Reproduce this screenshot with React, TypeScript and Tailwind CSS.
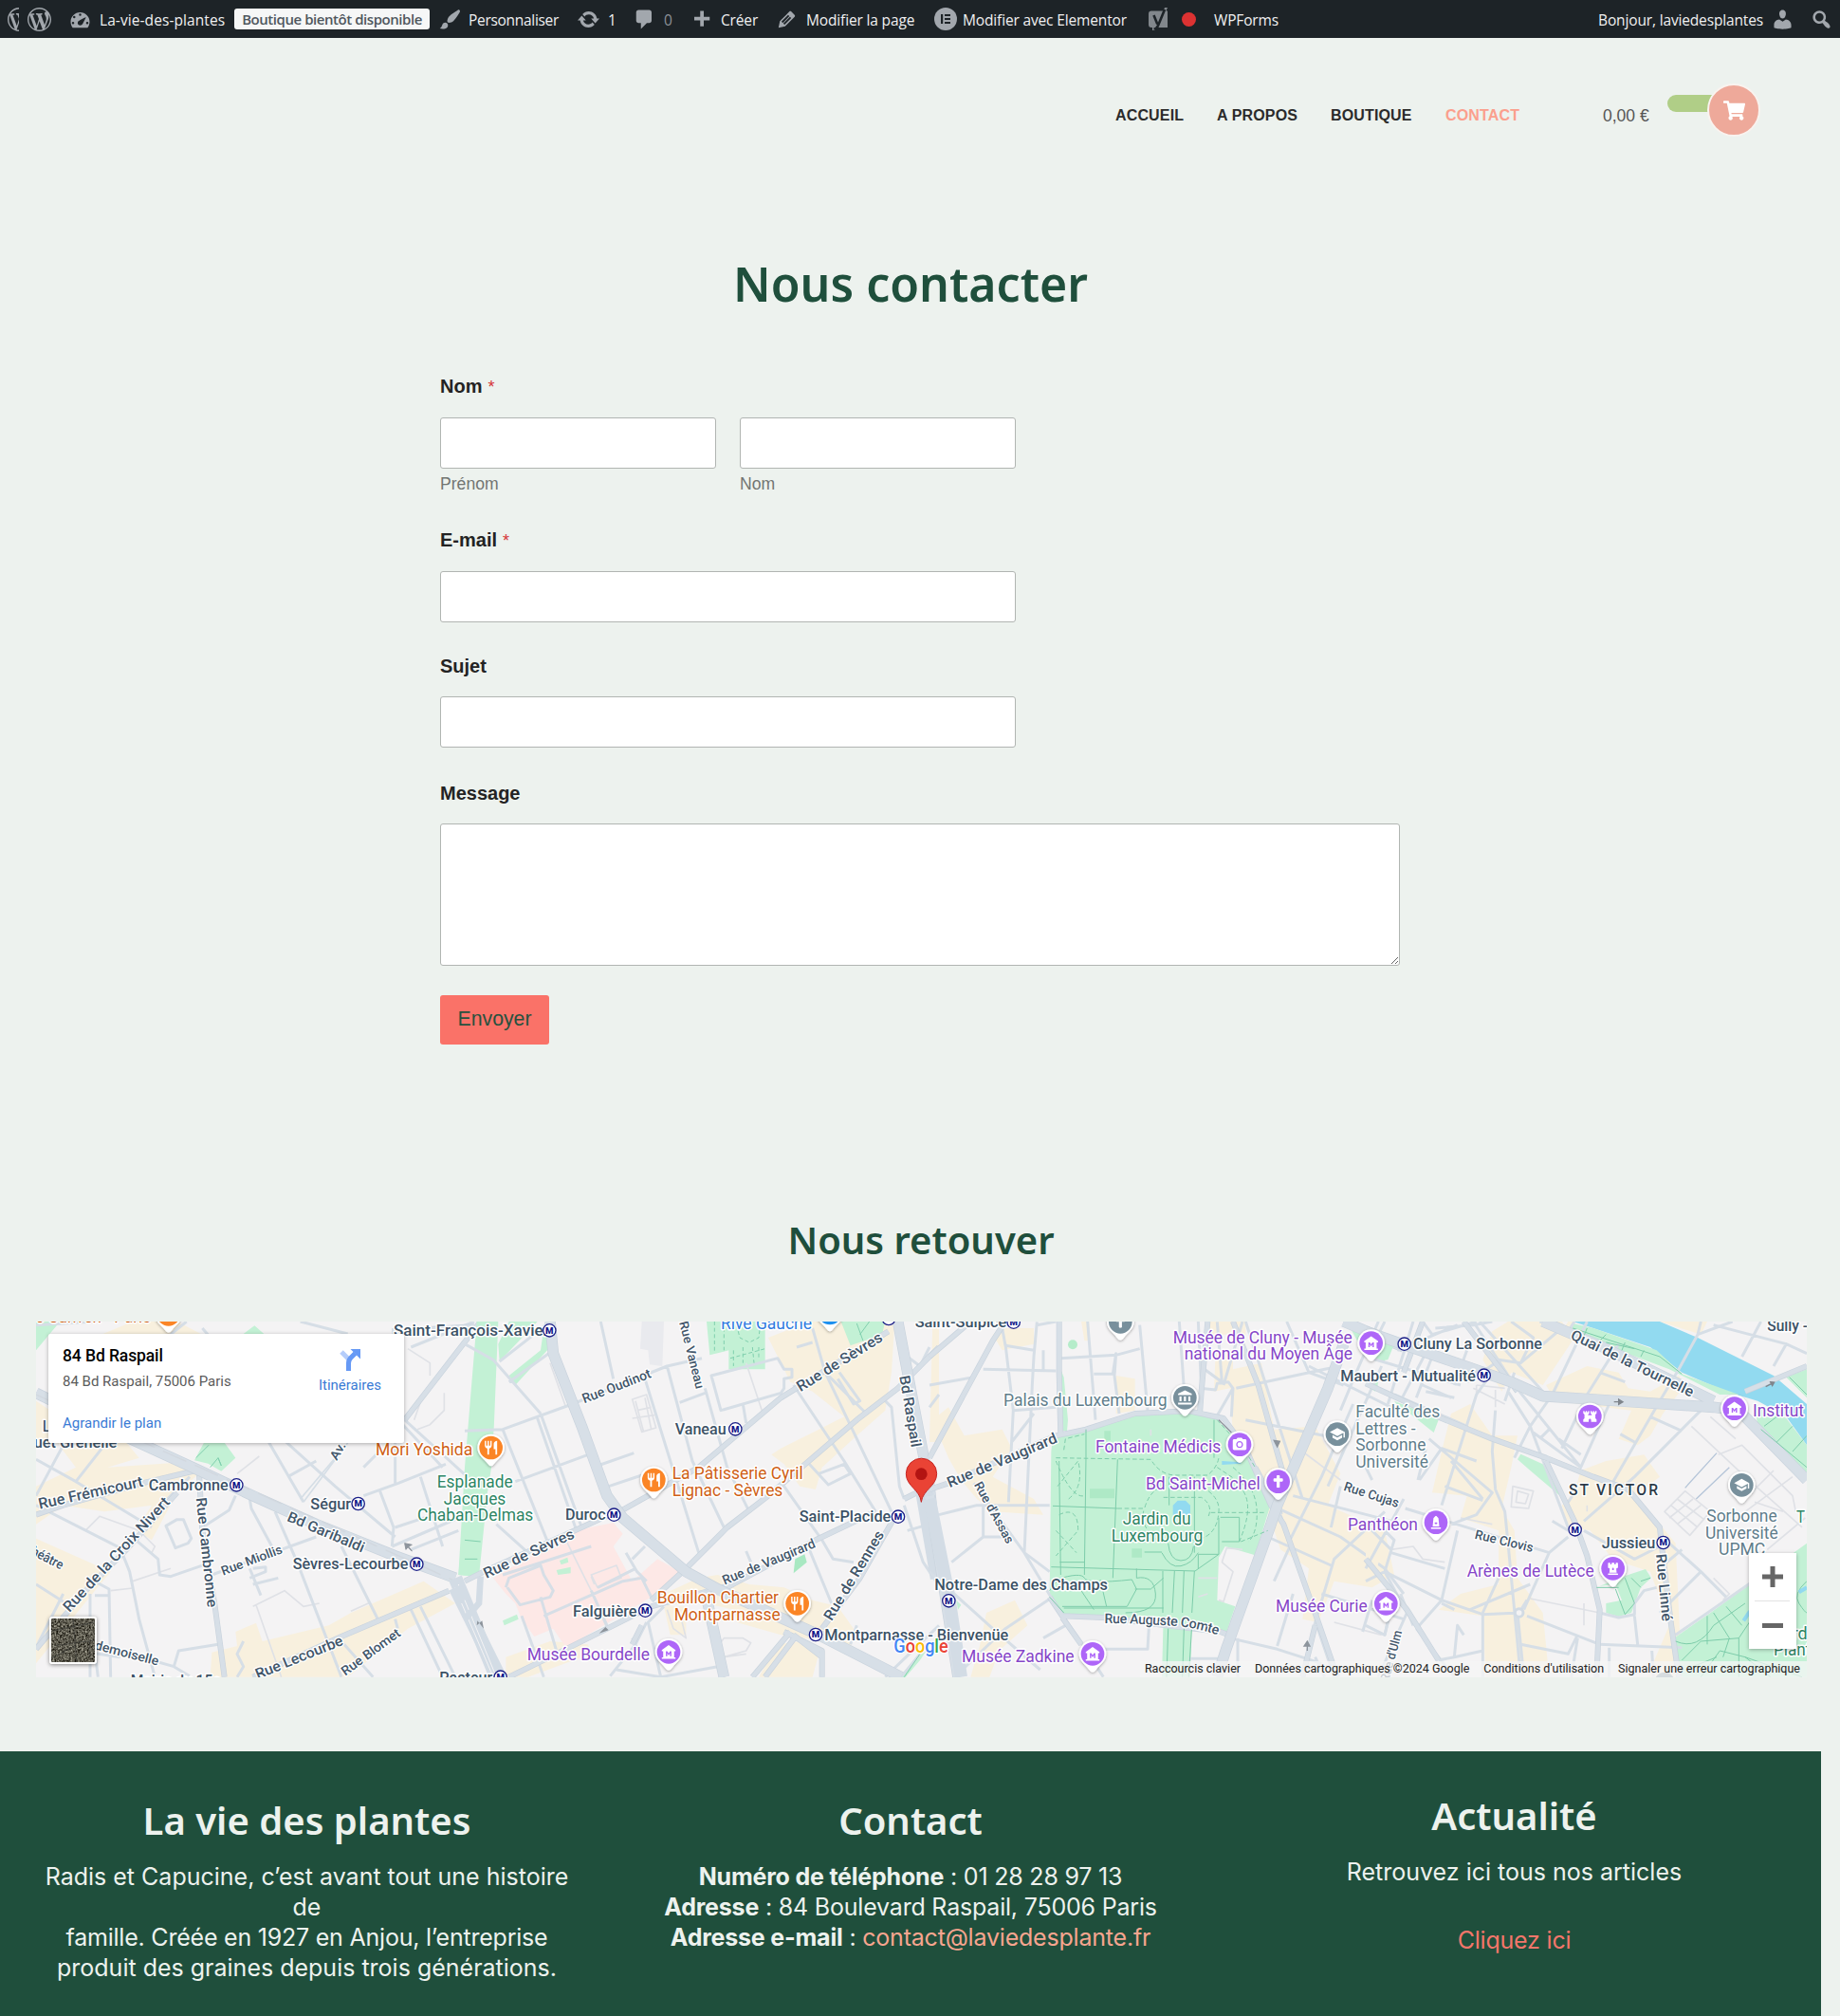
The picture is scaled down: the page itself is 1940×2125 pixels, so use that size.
import type { ReactNode } from "react";
import { MdMuseum, MdRestaurant, MdSchool, MdCameraAlt, MdAccountBalance, MdFort } from "react-icons/md";
import { FaChessRook, FaCross, FaMonument, FaShoppingCart } from "react-icons/fa";

/* ---------- Admin bar ---------- */

const ICONS = {
  wordpress:
    "M20 10c0-5.51-4.49-10-10-10C4.48 0 0 4.49 0 10c0 5.52 4.48 10 10 10 5.51 0 10-4.48 10-10zM7.78 15.37L4.37 6.22c.55-.02 1.17-.08 1.17-.08.5-.06.44-1.13-.06-1.11 0 0-1.45.11-2.37.11-.18 0-.37 0-.58-.01C4.12 2.69 6.87 1.11 10 1.11c2.33 0 4.45.87 6.05 2.34-.68-.11-1.65.39-1.65 1.58 0 .74.45 1.36.9 2.1.35.61.55 1.36.55 2.46 0 1.49-1.4 5-1.4 5l-3.03-8.37c.54-.02.82-.17.82-.17.5-.05.44-1.25-.06-1.22 0 0-1.44.12-2.38.12-.87 0-2.33-.12-2.33-.12-.5-.03-.56 1.2-.06 1.22l.92.08 1.26 3.41zM17.41 10c.24-.64.74-1.87.43-4.25.7 1.29 1.05 2.71 1.05 4.25 0 3.29-1.73 6.24-4.4 7.78.97-2.59 1.94-5.2 2.92-7.78zM6.1 18.09C3.12 16.65 1.11 13.53 1.11 10c0-1.3.23-2.48.72-3.59C3.25 10.3 4.67 14.2 6.1 18.09zm4.03-6.63l2.58 6.98c-.86.29-1.76.45-2.71.45-.79 0-1.57-.11-2.29-.33.81-2.38 1.62-4.74 2.42-7.1z",
  dashboard:
    "M3.76 17h12.48C17.34 15.63 18 13.9 18 12c0-4.41-3.58-8-8-8s-8 3.59-8 8c0 1.9.66 3.63 1.76 5zM9 6a1 1 0 1 1 2 0a1 1 0 1 1-2 0zM4 8a1 1 0 1 1 2 0a1 1 0 1 1-2 0zM8.52 11.4c.84-.83 6.51-3.5 6.51-3.5s-2.66 5.68-3.49 6.51c-.84.84-2.18.84-3.02 0-.83-.83-.83-2.18 0-3.01zM3 13a1 1 0 1 1 2 0a1 1 0 1 1-2 0zM15 13a1 1 0 1 1 2 0a1 1 0 1 1-2 0z",
  brush:
    "M18.33 3.57s.27-.8-.31-1.36c-.53-.52-1.22-.24-1.22-.24-.61.3-5.76 3.47-7.67 5.57-.86.96-2.06 3.79-1.09 4.82.92.98 3.96-.17 4.79-1 2.06-2.06 5.21-7.17 5.5-7.79zM1.4 17.65c2.37-1.56 1.46-3.41 3.23-4.64.93-.65 2.22-.62 3.08.29.63.67.8 2.57-.16 3.46-1.57 1.45-4 1.55-6.15.89z",
  update:
    "M10.2 3.28c3.53 0 6.43 2.61 6.92 6h2.08l-3.5 4-3.5-4h2.32c-.45-1.97-2.21-3.45-4.32-3.45-1.45 0-2.73.71-3.54 1.78L4.95 5.66C6.23 4.2 8.11 3.28 10.2 3.28zm-.4 13.44c-3.52 0-6.43-2.61-6.92-6H.8l3.5-4c1.17 1.33 2.33 2.67 3.5 4H5.48c.45 1.97 2.21 3.45 4.32 3.45 1.45 0 2.73-.71 3.54-1.78l1.71 1.95c-1.28 1.46-3.15 2.38-5.25 2.38z",
  comment: "M5 2h9c1.1 0 2 .9 2 2v7c0 1.1-.9 2-2 2h-2l-5 5v-5H5c-1.1 0-2-.9-2-2V4c0-1.1.9-2 2-2z",
  plus: "M17 7v3h-5v5H9v-5H4V7h5V2h3v5h5z",
  edit: "M13.89 3.39l2.71 2.72c.46.46.42 1.24.03 1.64l-8.01 8.02-5.56 1.16 1.16-5.58s7.6-7.63 7.99-8.03c.39-.39 1.22-.39 1.68.07zm-2.73 2.79l-5.59 5.61 1.11 1.11 5.54-5.65zm-2.97 8.23l5.58-5.6-1.07-1.08-5.59 5.6z",
  user: "M10 9.25c-2.27 0-2.73-3.44-2.73-3.44C7 4.02 7.82 2 9.97 2c2.16 0 2.98 2.02 2.71 3.81 0 0-.41 3.44-2.68 3.44zm0 2.57L12.72 10c2.39 0 4.52 2.33 4.52 4.53v2.49s-3.65 1.13-7.24 1.13c-3.65 0-7.24-1.13-7.24-1.13v-2.49c0-2.25 1.94-4.48 4.47-4.48z",
  search:
    "M12.14 4.18c1.87 1.87 2.11 4.75.72 6.89.12.1.22.21.36.31.2.16.47.36.81.59.34.24.56.39.66.47.42.31.73.57.94.78.32.32.6.65.84 1 .25.35.44.69.59 1.04.14.35.21.68.18 1-.02.32-.14.59-.36.81s-.49.34-.81.36c-.31.02-.65-.04-.99-.19-.35-.14-.7-.34-1.04-.59-.35-.24-.68-.52-1-.84-.21-.21-.47-.52-.77-.93-.1-.13-.25-.35-.47-.66-.22-.32-.4-.57-.56-.78-.16-.2-.29-.35-.44-.5-2.07 1.09-4.69.76-6.44-.98-2.14-2.15-2.14-5.64 0-7.78 2.15-2.15 5.63-2.15 7.78 0zm-1.41 6.36c1.36-1.37 1.36-3.58 0-4.95-1.37-1.37-3.59-1.37-4.95 0-1.37 1.37-1.37 3.58 0 4.95 1.36 1.37 3.58 1.37 4.95 0z",
};

function Dash({ name, className = "" }: { name: keyof typeof ICONS; className?: string }) {
  return (
    <svg viewBox="0 0 20 20" className={`h-[25px] w-[25px] shrink-0 fill-[#a2a7ad] ${className}`}>
      <path fillRule="evenodd" d={ICONS[name]} />
    </svg>
  );
}

function AdminBar() {
  return (
    <header className="flex h-10 items-center whitespace-nowrap bg-[#1d2327] font-['Open_Sans',sans-serif] text-[15.5px] tracking-[-0.15px] text-[#f0f0f1]">
      <div className="ml-2 w-[12px] shrink-0 overflow-hidden">
        <Dash name="wordpress" />
      </div>
      <Dash name="wordpress" className="ml-[9px]" />
      <Dash name="dashboard" className="ml-[18px]" />
      <span className="ml-[8px] w-[142px] pt-[3px] tracking-[0.08px]">La-vie-des-plantes</span>
      <span className="flex h-[22px] w-[206px] items-center justify-center rounded-[3px] bg-[#f6f7f7] pt-px text-[15px] font-semibold tracking-[-0.45px] text-[#50575e]">
        Boutique bientôt disponible
      </span>
      <Dash name="brush" className="ml-[9px]" />
      <span className="ml-[7px] w-[115px] pt-[3px] tracking-[-0.3px]">Personnaliser</span>
      <Dash name="update" className="-ml-[1px]" />
      <span className="ml-[8px] w-[27px] pt-[3px]">1</span>
      <Dash name="comment" className="-ml-[1px]" />
      <span className="ml-[8px] w-[27px] pt-[3px] text-[#8c9197]">0</span>
      <Dash name="plus" className="mt-[2px]" />
      <span className="ml-[8px] w-[57px] pt-[3px]">Créer</span>
      <Dash name="edit" />
      <span className="ml-[8px] w-[134px] pt-[3px]">Modifier la page</span>
      <svg viewBox="0 0 24 24" className="ml-[1px] h-6 w-6 shrink-0">
        <circle cx="12" cy="12" r="12" fill="#a2a7ad" />
        <path d="M7 7h2.200v10H7zM11 7h6v2h-6zM11 11h6v2h-6zM11 15h6v2h-6z" fill="#1d2327" />
      </svg>
      <span className="ml-[6px] w-[196px] pt-[3px]">Modifier avec Elementor</span>
      <svg viewBox="0 0 22 26" className="h-[26px] w-[22px] shrink-0">
        <path d="M3 4.500h12.500L17 1h3L18.500 4.500H20V22H8L6.500 25H4V22H3a3 3 0 0 1-3-3V7.500a3 3 0 0 1 3-3z" fill="#82878c" />
        <path d="M5.500 9l3.800 9.500M17 3L10 20Q8.500 23.500 5.500 23.500" fill="none" stroke="#1d2327" strokeWidth="2.600" />
      </svg>
      <span className="ml-[13px] h-[15px] w-[15px] rounded-full bg-[#dc3232]" />
      <span className="ml-[19px] pt-[3px]">WPForms</span>
      <span className="ml-auto pt-[3px]">Bonjour, laviedesplantes</span>
      <Dash name="user" className="ml-[8px]" />
      <Dash name="search" className="mr-[7px] ml-[16px]" />
    </header>
  );
}

/* ---------- Site header ---------- */

function SiteHeader() {
  return (
    <div className="flex h-[209px] w-[1920px] pt-[48px] font-['Liberation_Sans',Arial,sans-serif]">
      <nav className="ml-auto flex pt-[22px] text-base leading-6 font-bold tracking-[0.15px] text-[#2b2b2b]">
        <span className="w-[107px]">ACCUEIL</span>
        <span className="w-[120px]">A PROPOS</span>
        <span className="w-[121px]">BOUTIQUE</span>
        <span className="w-[166px] text-[#fb9f8d]">CONTACT</span>
      </nav>
      <span className="w-[68px] pt-[20px] text-[17.5px] leading-7 text-[#555]">0,00&nbsp;€</span>
      <div className="flex h-14 w-[162px] items-start">
        <div className="mt-3 h-[18px] w-[60px] rounded-[9px] bg-[#b0ce87]" />
        <div className="-ml-[18px] flex h-14 w-14 shrink-0 items-center justify-center rounded-full border-2 border-[#f9f3ef] bg-[#eea99a]">
          <FaShoppingCart className="h-[21px] w-[23px] text-white" />
        </div>
      </div>
    </div>
  );
}

/* ---------- Contact form ---------- */

const FIELD = "block h-[54px] w-full rounded-[3px] border border-[#b1b5b2] bg-white";

function Label({ children, required }: { children: string; required?: boolean }) {
  return (
    <label className="mb-[19px] block text-xl leading-[26px] font-bold text-[#232323]">
      {children}
      {required && <span className="ml-[6px] text-[18px] font-normal text-[#d63638]">*</span>}
    </label>
  );
}

function ContactForm() {
  return (
    <form className="ml-[464px] w-[1012px] font-['Liberation_Sans',Arial,sans-serif]">
      <div className="h-[161.500px] w-[607px]">
        <Label required>Nom</Label>
        <div className="grid grid-cols-2 gap-[25px]">
          <div>
            <input className={FIELD} />
            <p className="mt-[4px] text-[17.6px] leading-6 text-[#727572]">Prénom</p>
          </div>
          <div>
            <input className={FIELD} />
            <p className="mt-[4px] text-[17.6px] leading-6 text-[#727572]">Nom</p>
          </div>
        </div>
      </div>
      <div className="h-[133.500px] w-[607px]">
        <Label required>E-mail</Label>
        <input className={FIELD} />
      </div>
      <div className="h-[134px] w-[607px]">
        <Label>Sujet</Label>
        <input className={FIELD} />
      </div>
      <div>
        <Label>Message</Label>
        <textarea className="block h-[150px] w-full resize rounded-[3px] border border-[#b1b5b2] bg-white" />
      </div>
      <button
        type="button"
        className="mt-[31px] block h-[52px] w-[115px] rounded-[3px] bg-[#fa7268] text-[21.25px] text-[#27513f]"
      >
        Envoyer
      </button>
    </form>
  );
}

/* ---------- Map ---------- */

const NAVY = "#3c5266";
const ORANGE = "#cf5f16";
const PURPLE = "#8646c8";
const GREEN = "#2d8565";
const SLATE = "#5f7d8b";

/** Group whose units are thirds of a pixel, shifted along the map. */
function Sector({ x, children }: { x: number; children: ReactNode }) {
  return <g transform={`translate(${x} 1380) scale(0.33333)`}>{children}</g>;
}

type TextProps = { x: number; y: number; w: number; t: string; c?: string; size?: number; bold?: boolean };

/** Horizontal place label, w units wide. */
function Place({ x, y, w, t, c = NAVY, bold, size = bold ? 49 : 53 }: TextProps) {
  return (
    <text
      x={x} y={y} textLength={w} lengthAdjust="spacingAndGlyphs" fontSize={size} fill={c}
      fontWeight={bold ? 500 : 400} stroke="#fff" strokeWidth="9" strokeLinejoin="round" paintOrder="stroke"
    >
      {t}
    </text>
  );
}

/** Street name whose baseline runs between two points. */
function Street({ p, t, size = 45 }: { p: [number, number, number, number]; t: string; size?: number }) {
  const [x1, y1, x2, y2] = p;
  const angle = (Math.atan2(y2 - y1, x2 - x1) * 180) / Math.PI;
  return (
    <text
      transform={`translate(${x1} ${y1}) rotate(${angle})`} textLength={Math.hypot(x2 - x1, y2 - y1)}
      lengthAdjust="spacingAndGlyphs" fontSize={size} fill="#42566a" fontWeight="500"
      stroke="#fff" strokeWidth="8" strokeLinejoin="round" paintOrder="stroke"
    >
      {t}
    </text>
  );
}

function Metro({ x, y }: { x: number; y: number }) {
  return (
    <g>
      <circle cx={x} cy={y} r="20" fill="#fff" stroke="#1b1f87" strokeWidth="4" />
      <text x={x} y={y + 10.500} textAnchor="middle" fontSize="29" fontWeight="900" fill="#14188a">M</text>
    </g>
  );
}

type IconType = typeof MdMuseum;

function Pin({ x, y, c, icon: Icon, s = 52 }: { x: number; y: number; c: string; icon: IconType; s?: number }) {
  return (
    <g>
      <path
        d={`M${x - 43} ${y}a43 43 0 1 1 86 0c0 24-20 34-31 49q-6 9-12 9t-12-9c-11-15-31-25-31-49z`}
        fill="#fff" filter="url(#pin-shadow)"
      />
      <circle cx={x} cy={y} r="37" fill={c} />
      <Icon x={x - s / 2} y={y - s / 2} size={s} color="#fff" />
    </g>
  );
}

const ORANGE_PIN = "#fb8526";
const PURPLE_PIN = "#ae66f8";
const SLATE_PIN = "#78909c";

function Roads({ minor, mid = "", major = "", thin = "" }: { minor: string; mid?: string; major?: string; thin?: string }) {
  return (
    <g fill="none" strokeLinejoin="round">
      <path d={thin} stroke="#dfe1e6" strokeWidth="5" />
      <path d={minor} stroke="#d6dee6" strokeWidth="9" />
      <path d={mid} stroke="#c9d3dd" strokeWidth="18" />
      <path d={mid} stroke="#d7dfe7" strokeWidth="14" />
      <path d={major} stroke="#c9d3dd" strokeWidth="35" />
      <path d={major} stroke="#d7dfe7" strokeWidth="31" />
    </g>
  );
}

function WestGround() {
  return (
    <Sector x={0}>
      <g fill="#f8f0de">
        <path d="M180 422H400L440 470 340 500 560 485 630 520 560 580 480 730 430 700 480 620 330 640 200 620 114 680V560L240 500Z" />
        <path d="M114 725L350 830 300 890 114 1120ZM114 290L160 320V422H114ZM320 80L420 39H560L640 80Z" />
        <path d="M665 1163L670 1085 750 1065 745 1020 810 992 830 1050 1040 1000 1110 960 1340 860 1440 930 1290 1010 1100 1163Z" />
      </g>
      <g fill="#c3f1d5">
        <path d="M114 39H190L114 130ZM645 422H710L745 470 700 512 658 488 615 478ZM770 78L805 52 835 78Z" />
        <path d="M1490 400H1570L1500 845 1450 840Z" />
      </g>
      <Roads
        thin="M270 700L315 655 440 700 490 750 480 770M800 940L900 890 960 940 1010 930M810 935L890 1163M420 860L540 820M350 890L420 882M750 520L820 465M1110 955L1170 928M1320 380L1360 365 1405 320V265M1290 125L1360 170V210M1340 265L1310 350"
        minor="M114 475L240 545 430 660 480 690M114 620L380 755 410 830 440 980 490 1163M430 730L500 790 505 840 540 845 670 800M240 545L330 430M114 870L200 925M280 850L345 885 350 1163M285 900V1163M300 905L345 905M310 1163L290 1000M210 1075L380 1100M600 530L520 610M745 590L725 635 640 690M790 600L795 630 860 750M870 640L940 800 1080 1163M1080 750L1200 990M690 1060L565 1080 550 1130 600 1160M550 1130L480 1110M670 840L1000 720M790 820L825 905M800 870L880 850M790 850L840 830 840 815 800 820M850 420L960 610M905 420L1060 560 1250 720M1250 422V550M1150 500L1200 450M1000 480L910 530M1150 590L1260 550 1410 490M1200 570L1245 690 1240 750M1330 530L1400 750M1250 690L1400 640M1280 350L1500 550M1240 750L1450 660M1260 350L1400 500M1300 760L1450 700M1300 950L1400 1163M1330 940L1440 1163M1250 980L1258 1010M525 685L560 665 580 665 605 725 595 740 555 755ZM640 60L700 130M114 50L300 39M590 39L540 80M950 39L1100 78M1300 120L1500 39M200 430L114 590M200 900L114 1070M1180 1163L1080 1050M750 1163L770 1130 750 1090 770 1050"
        mid="M630 520L640 700 680 940 710 1163M1420 890L1080 1035 800 1163M114 650L200 620 450 550 620 510M560 580L400 760 280 880 114 1075M1240 70L1500 55M1520 39L1280 350"
        major="M114 265L380 395 620 505 800 590 1000 680 1250 780 1440 850"
      />
      <path d="M1060 470L950 600M1100 422L960 610" stroke="#d5dee6" strokeWidth="5" />
      <path d="M1440 850L1570 1163" stroke="#d3dce5" strokeWidth="44" />
      <path d="M1440 880L1520 1080M1450 870L1540 1080" stroke="#f4f3f4" strokeWidth="3" />
      <path d="M114 270L1430 855" stroke="#ced3da" strokeWidth="4" fill="none" strokeDasharray="80 30" opacity=".6" />
      <path d="M665 500L690 470 700 495 690 470M620 470L660 430" stroke="#7fcfae" strokeWidth="3" fill="none" />
      <path d="M1280 740L1303 745 1292 750 1303 765 1290 752 1284 760Z" fill="#8d949c" stroke="#8d949c" strokeWidth="3" />
    </Sector>
  );
}

function MidWestGround() {
  return (
    <Sector x={490}>
      <path d="M560 39H630L625 180 585 175 580 130 555 125Z" fill="#e9eaee" />
      <g fill="#f8f0de">
        <path d="M960 90L1090 39H1360L1350 200 1330 320 1240 400 1130 500 1110 570 1060 560 1010 490 970 460 1000 440 1120 380 1200 340 1100 260 1030 230Z" />
        <path d="M740 850L800 840 900 870 1010 880 1100 920 1180 940 1230 1010 1220 1080 1150 1050 1000 1030 860 990 850 950 720 920 640 940 630 900Z" />
        <path d="M990 1060L1060 1050 1120 1090 1100 1163H930ZM130 1163V1100L270 1050 390 1060 400 1090 200 1163ZM630 940H700V1030H650ZM1480 39H1500V420H1470Z" />
      </g>
      <path d="M90 850L350 700 470 675 500 710 470 750 530 860 610 790 680 830 590 910 490 970 320 1070 280 1010 220 1035 180 980 160 930 130 900Z" fill="#fde8e6" />
      <g fill="#c3f1d5">
        <path d="M38 39H106L92 380 45 845-20 840 0 500ZM140 39H230L110 165 106 110ZM250 60L270 120 160 240 140 210 240 130Z" />
        <path d="M765 39H950V190H835V130L775 145ZM1190 39H1330L1320 80 1220 115ZM300 795L325 785 328 800 305 808ZM290 825L335 815 335 835 295 840ZM120 985L165 965 170 980 125 1000ZM1380 1163L1430 1100 1460 1080 1440 1110 1380 1180Z" />
        <path d="M1045 790L1075 775 1082 800 1040 835Z" fill="#a8e8c2" />
      </g>
      <Roads
        thin="M530 285L575 270 605 375 560 388ZM545 320L590 310M540 290L565 385M570 280L590 380M530 345L600 335M890 170L940 320M400 840L480 810 495 850 420 880ZM410 870L400 845M640 950L660 1010 700 1040 680 960M320 730L400 890 450 1010M270 170L320 310M805 1060L820 1040 880 1040 905 1055 890 1080 820 1100M820 1100L890 1090"
        minor="M0 110L90 160 240 330M0 385L120 380 340 300 640 180 750 155M240 330L370 690M120 380L260 730M230 345L350 690M110 165L270 40M140 230L280 130M160 545L390 460M430 39L470 220M420 495L535 455M440 565L560 525M570 220L740 770M640 180L720 480 820 690M760 250L830 500 900 640M680 295L760 265M780 210L990 155 1010 190 1035 190V215L1010 220V250L1000 265 810 320ZM880 300L890 360M1040 240L1200 480 1300 640M1100 60L1140 200 1270 330M1140 200L1350 640M1330 290L1350 310 1375 560 1390 600M1010 560L1130 730 1165 790 1230 800M1090 760L1160 930M1120 520L1200 490 1220 520 1150 555 1090 490M1185 200L1250 290 1230 300 1180 220M1050 120L1100 105M890 765L905 800M510 770L545 830 575 860M530 790L570 750M130 880L140 850 240 810 250 840 280 890 270 910 175 935 135 880M240 910L290 1080M120 840L400 750M250 970L500 860 560 850 590 910M420 880L540 820M400 890L450 1000M630 940L580 990 620 1163M575 990L540 1060 460 1160M480 1140L620 1163 800 1130M760 940L820 1163M180 970L250 1163M530 1040L560 1100M100 680L200 770M1380 1163L1440 1090M1390 620L1450 800 1490 860M1400 700L1470 680M1240 1000L1220 1060M1470 120L1440 180 1400 150M1500 1000L1330 1163"
        mid="M740 500L1000 280 1340 70M490 640L740 500M0 860L60 830 480 640M700 820L830 690 960 590 1240 350 1370 250 1500 120M590 920L700 820M810 890L1110 730 1300 640M590 940L850 870M140 1163L320 1075 590 940M1370 640L1250 850 1130 1010M1010 1020L1130 1080V1163M1390 600L1470 560M950 1163L1050 1030M910 1163L1030 1020M560 1000L530 1060M1040 1030L1130 1100"
        major="M270 39L280 140 370 370 450 590 500 660 700 830 810 890M1370 39L1410 250 1470 560 1500 850M810 890L1120 1030 1380 1163M760 890L820 1163"
      />
      <path d="M30 700L120 580" stroke="#c3f1d5" strokeWidth="2" />
      <path d="M-30 880L110 1163" stroke="#d3dce5" strokeWidth="44" />
      <path d="M-10 930L90 1163M0 920L100 1163" stroke="#f4f3f4" strokeWidth="3" />
      <path d="M50 845L45 930 0 980" stroke="#d3dce5" strokeWidth="20" fill="none" />
      <path d="M1450 560L1500 850" stroke="#d3dce5" strokeWidth="55" />
      <g stroke="#7fcfae" strokeWidth="3" fill="none">
        <path d="M790 39V135M820 39V130M860 50L870 90 900 105 930 90 935 50M840 155L950 125M850 130V180M880 120V170M910 120L915 170M930 120V160" strokeDasharray="12 8" />
        <path d="M1240 45L1260 100M1280 39L1250 80M1390 1163L1440 1090M0 730L50 735M0 790H40" />
      </g>
      <path d="M60 1010L40 985 38 1000 55 985ZM425 1025L445 1005 455 1015Z" fill="#8d949c" />
    </Sector>
  );
}

function MidEastGround() {
  return (
    <Sector x={980}>
      <g fill="#f8f0de">
        <path d="M10 350L60 310 110 400 230 380 260 440 200 530 330 600 360 650 200 640 150 600 100 540 60 470ZM200 80L240 60H330V110L230 130Z" />
        <path d="M480 39H505V100H490ZM590 210L650 220V320L590 330ZM905 130H960V190L1050 170 1090 380 1220 370 1300 520 1260 620 1440 700 1470 840 1400 880 1280 860 1230 990 1180 980 1200 820 1110 760 1070 640 1030 500 960 400 950 250 900 260Z" />
        <path d="M180 960L270 920 310 1000 220 1080 190 1163H130L160 1060ZM880 39H1000V80H870Z" />
      </g>
      <path
        d="M385 450L390 400 495 376 650 335 840 325 905 345 960 400 1030 500 1078 620 1030 778 935 750 915 785 910 920 967 940 940 1020 830 990 825 1163H735L740 975H430L380 905Z"
        fill="#c3f1d5"
      />
      <path d="M415 190L425 215 438 350 435 385 418 385ZM1320 39L1380 75 1450 100 1440 165 1380 150ZM85 920L100 935 90 950ZM1380 240L1420 230 1410 260ZM1470 290L1500 310V330Z" fill="#c3f1d5" />
      <circle cx="453" cy="112" r="15" fill="#b5ecca" />
      <path d="M507 568H585V598H507ZM553 385H573V415H553ZM640 757H672V785H640Z" fill="#aee9c6" />
      <path d="M770 650V620L785 605H810L825 620V650ZM925 480L985 484V488L925 492Z" fill="#92daf0" />
      <Roads
        thin="M925 800L940 755 990 760M925 800L960 830 930 925 915 920M850 850H910M850 910L880 900M700 380V400M1180 450L1300 540M1280 990L1430 1030"
        minor="M0 240L140 215M0 310L30 270M230 60L240 115 330 130M170 190L400 195M340 40L330 150 325 240 300 770M360 130V190M240 110L265 320 250 610M265 320L400 310M260 420L330 330M500 39L525 350M415 155L590 145 665 125M520 205H580L590 140 585 210 600 330M665 50L690 320M790 39L805 250M850 39L860 250 905 255 910 235 945 230 960 250 905 345M910 40L925 230M870 190L925 230M960 250L955 340M970 250L1250 190 1300 180M990 39L930 240M1000 39L1180 600M400 39L340 50M30 650L150 620 380 620M170 620V720L70 800M170 720H250M140 550L300 770 390 920 550 1163M300 770L380 830M0 830L100 920 200 1010 350 1140M390 910L240 1010 80 1163M430 1000L360 1040M550 1075H690L695 990M950 1040L1100 1075 1240 1120M975 1040V1163M820 1105H940M1100 1065L1150 900M1230 980L1110 650M1220 990L1180 1163M1225 1000L1280 1163M1080 620L1300 720 1440 820 1500 900M1140 730L1240 530 1340 300M1000 350L1300 410M1150 590L1500 680M1270 690L1300 560M1220 990L1280 790 1440 640M1070 720L1270 810M1140 750L1090 860M1240 900L1500 980M1370 1020L1400 920M1440 1030L1460 940M1130 39L1200 200 1310 240M1420 39L1350 200 1300 320M1200 180L1500 330M1430 180L1260 560M1250 1163L1220 1100"
        mid="M0 570L60 550 400 400 495 380 650 330 820 322 930 345 1000 440 1080 620 1120 680 1230 990 1290 1163M0 470L200 100 240 39M1220 1000L1180 1163M1030 500L1110 650M880 39L860 260 855 330M380 910L420 970 550 975 750 1000 920 1020 960 1035M410 39V200L415 400M0 150L130 39M960 39L1040 240 1130 560M420 975L480 1060"
        major="M0 590L90 1163M1310 110L1260 250 1100 620 1080 680 940 1070 910 1163M1310 39L1500 120"
      />
      <path d="M0 600L60 900 100 1163" stroke="#d3dce5" strokeWidth="40" fill="none" />
      <g fill="none" stroke="#7cccaa" strokeWidth="3">
        <path d="M495 380V470L490 840M595 475L580 850M390 622L595 630M385 815L840 828 915 775H850V820M410 480L415 840M758 530V620M838 530V770M755 740Q760 795 795 795T835 750M735 770Q760 820 795 812T850 770M680 768H735M738 828V960M775 828L768 960M805 828L800 960M838 828L830 960M915 660V775M920 658H980V735H925M412 800H490M400 855Q480 830 490 850T640 855L655 885 625 940H420M655 820V850Q710 840 715 900T620 960M480 890L520 950M540 855L560 940M380 910L425 960M900 350V470M380 890L410 850M650 885H700L740 850M425 945H740M755 1010L750 1163M805 1010L800 1163M830 1000L820 1163" />
        <path
          d="M400 470L700 475Q730 525 780 525H880Q910 500 915 470M425 445L430 410 490 395M400 480Q450 600 490 590M405 560L470 480Q490 560 440 600M410 650Q470 620 470 700L400 780M400 700L465 770M595 630H680Q700 560 760 555H850Q920 590 915 640 910 720 840 730H720Q660 680 680 630M740 595H860Q900 620 880 660M910 350L1000 450 1030 500M920 530Q980 540 1000 590T980 735M960 500Q1030 560 1035 630T1010 735M890 643H1060M985 735L1070 700M910 500L1000 560"
          strokeDasharray="14 8"
        />
      </g>
      <path d="M915 350L955 390M1090 415L1100 435 1108 418ZM1195 1055V1080M1185 1065L1195 1050 1203 1065Z" stroke="#8d949c" strokeWidth="4" fill="#8d949c" />
    </Sector>
  );
}

function EastGround() {
  return (
    <Sector x={1440}>
      <g fill="#f8f0de">
        <path d="M370 160L400 70 450 39H620L660 90 560 240 460 200 430 260ZM640 39H660V55H630ZM570 240L700 180 800 200 830 250 900 260 990 210 1010 240 940 330 900 400 860 430 800 410 840 320 600 290Z" />
        <path d="M270 330L330 300 400 400 480 400 460 500 430 630 470 700 480 850 560 960 580 1163H380L370 970 230 950 300 900 420 870 420 700 300 660 320 590 210 580 240 450Z" />
        <path d="M680 510L760 480 880 460 930 530 850 590 930 680 980 740 1000 1163H890L960 1000 900 830 780 790 710 700 640 690 620 620 660 580ZM0 740L50 770 20 870 0 850ZM930 39H1080L1060 80Z" />
      </g>
      <path d="M655 39H930L1050 90 1290 210 1395 300V430L1330 340 1240 290 1140 260 1000 200 900 120 720 60Z" fill="#92daf0" />
      <g fill="#c3f1d5">
        <path d="M655 45L720 60 920 130 1000 205 1180 270 1120 270 960 190 800 130 650 70ZM1230 300L1330 345 1395 430V520L1240 370ZM1330 215L1395 190V280ZM480 475L490 458 560 490 620 595 520 510ZM50 110L90 110 70 160 30 165ZM90 290L190 330 230 350 215 390ZM0 230L40 240 20 255Z" />
        <path d="M740 875L830 840 885 822 903 850 870 880 840 960 800 972 760 960V930L810 920 790 870ZM975 1040L1090 960 1395 740V1163H1000Z" />
      </g>
      <Roads
        thin="M465 560L530 575 515 630 460 625ZM480 575L515 585 505 615 475 610ZM520 915L740 960M700 620V640M350 240L440 250M350 240V270M340 250L440 300M410 255V310M945 640L1010 575 1090 640 1025 715ZM965 620L1050 690M985 600L1070 665M960 660L1035 600M985 680L1060 620M1030 370L1200 530 1380 690M1090 340L1170 410M1115 460L1190 430 1350 590 1360 640M1200 640L1350 530M1230 610L1320 640M1290 510L1210 590M1100 850L1150 900 1130 920M1270 760L1390 660M80 760L150 750 180 790 250 800M690 930V1000M300 660L400 680"
        minor="M60 39L30 100M290 50L100 130M180 39L210 80 350 39M220 60L340 50 400 39M340 39L470 240 680 500M360 39L560 260M460 39L530 90 490 170 420 160M550 39L620 60 490 170M320 130L280 240M210 150L160 280M0 150L300 240M110 290L210 100M190 260L280 280M90 270L320 370M180 240L270 280M400 200L350 270 240 620M320 230L410 170M410 320L400 450 410 570 440 640 450 740 490 1163M470 200L440 290M450 260L520 370 640 690M520 370L590 270 700 39M530 390L680 500 770 300M620 440L700 270 800 110M610 410L680 460M470 470L520 370M740 200L820 230M780 130L840 160M780 550L930 290 990 190M640 610L660 580M690 670L850 530 1060 320M900 340L1000 385M840 560L780 550M805 395L850 420M550 410L580 380M0 500L20 540M200 410L400 580 350 650 270 680M170 540L240 440 350 480M270 480L370 600M250 560L370 605M125 630L580 770M290 700L240 920 160 1010M60 830L240 920 370 965 485 960 510 920M80 760L0 680M80 770L250 820M60 830L90 730 60 700M640 720L580 770 500 950M330 950L520 870M0 1000L60 1030 80 950M370 960V1163M280 1100L370 1080M280 1100L290 1000 310 1030M230 1110L280 1100M480 960L500 1163M490 1060L640 1090 670 1030M650 1163L670 1040M510 970L740 1060 1000 1070M770 1070V1163M905 1080L910 1163M850 970L860 1060M690 700L850 790 930 750M740 960L800 975 850 965 850 930 880 890 920 880M930 960L1060 830M960 740L1060 830 1140 910M1000 760L940 810M160 1010L280 1163M0 860L60 830M990 190L1050 80 1060 39M1050 80L1160 39M1190 150L1250 39M1290 180L1330 110 1395 140M1100 50L1330 110M660 39L640 70M980 1030L1240 850M240 930L280 950M150 39L70 300M420 850L370 960M165 540L190 440M0 820L120 600M60 830L130 960 40 1163M590 670L640 700M150 1000L110 900"
        mid="M0 235L240 345 400 410 570 470 720 530 830 570 930 690 935 740 965 990 990 1163M570 480L660 670 700 780 740 950 730 1163M180 39L120 200M310 39L480 260M0 790L130 950 230 1110M1200 260L1395 180"
        major="M0 70L200 140 460 230 560 275 720 285 1100 310 1180 320 1395 540M560 39L750 120 1100 290"
      />
      <circle cx="485" cy="960" r="13" fill="#f4f3f4" stroke="#d2dbe4" strokeWidth="9" />
      <path d="M1010 565L1110 455M1045 600L1150 500" stroke="#b5c5d8" strokeWidth="4" />
      <g stroke="#7cccaa" strokeWidth="3" fill="none">
        <path d="M655 60L930 150 1000 205M700 60L690 85M760 80L740 100M820 105L810 130M880 130L870 150M760 105L850 125M1250 380L1395 500M1260 370L1300 340M1300 420L1350 370M1350 450L1395 400M1340 215L1395 270M820 850L850 930 820 965M790 885L820 965M840 850L870 880M900 850L870 860M730 880L800 880" />
        <path d="M980 1050Q1050 1080 1100 1000L1200 930M1000 1110L1060 1050 1180 1040 1220 980M1060 1163L1120 1080 1200 1100 1280 1163M1100 960L1150 1040 1130 1100M1010 1140L1110 1100M1180 1040V1163M1395 860Q1350 900 1370 930T1395 960M1080 970V1060M1380 1163L1200 1100M1140 940L1190 1000" />
      </g>
      <path d="M1195 985L1215 955M1370 895L1395 880" stroke="#92daf0" strokeWidth="12" />
      <path d="M785 293H810M800 285L813 293 800 301ZM1265 245L1290 232M1280 230L1292 231 1286 242Z" stroke="#7f858c" strokeWidth="4" fill="#7f858c" />
      <circle cx="945" cy="1180" r="32" fill="#78909c" />
    </Sector>
  );
}

function MapLabels() {
  return (
    <>
      <Sector x={0}>
        <Place x={112} y={42} w={365} t="o Sunven - Paris" c={ORANGE} />
        <Place x={1245} y={84} w={491} t="Saint-François-Xavier" bold />
        <Place x={135} y={387} w={45} t="La" bold />
        <Place x={10} y={437} w={360} t="Picquet Grenelle" bold />
        <Place x={470} y={573} w={252} t="Cambronne" bold />
        <Place x={982} y={632} w={128} t="Ségur" bold />
        <Place x={926} y={822} w={365} t="Sèvres-Lecourbe" bold />
        <Place x={1188} y={463} w={307} t="Mori Yoshida" c={ORANGE} />
        <Place x={1382} y={565} w={240} t="Esplanade" c={GREEN} />
        <Place x={1403} y={617} w={197} t="Jacques" c={GREEN} />
        <Place x={1320} y={669} w={367} t="Chaban-Delmas" c={GREEN} />
        <Place x={1390} y={1182} w={168} t="Pasteur" bold />
        <Place x={413} y={1192} w={285} t="Mairie du 15e" bold />
        <Street p={[125, 632, 455, 560]} t="Rue Frémicourt" size={48} />
        <Street p={[220, 960, 540, 612]} t="Rue de la Croix Nivert" size={47} />
        <Street p={[620, 597, 657, 944]} t="Rue Cambronne" size={46} />
        <Street p={[706, 842, 896, 770]} t="Rue Miollis" size={40} />
        <Street p={[905, 668, 1145, 770]} t="Bd Garibaldi" size={46} />
        <Street p={[815, 1170, 1088, 1060]} t="Rue Lecourbe" size={46} />
        <Street p={[1092, 1160, 1270, 1030]} t="Rue Blomet" size={41} />
        <Street p={[75, 764, 192, 824]} t="Théâtre" size={42} />
        <Street p={[240, 1060, 498, 1127]} t="Mademoiselle" size={41} />
        <Street p={[1065, 480, 1095, 430]} t="Av." size={40} />
        <Metro x={748} y={556} />
        <Metro x={1133} y={615} />
        <Metro x={1318} y={806} />
        <Pin x={533} y={16} c={ORANGE_PIN} icon={MdRestaurant} />
      </Sector>
      <Sector x={490}>
        <Place x={665} y={395} w={162} t="Vaneau" bold />
        <Place x={318} y={667} w={128} t="Duroc" bold />
        <Place x={1058} y={673} w={290} t="Saint-Placide" bold />
        <Place x={342} y={971} w={203} t="Falguière" bold />
        <Place x={1138} y={1046} w={582} t="Montparnasse - Bienvenüe" bold />
        <Place x={810} y={64} w={288} t="Rive Gauche" c="#2f7be0" />
        <Place x={656} y={538} w={414} t="La Pâtisserie Cyril" c={ORANGE} />
        <Place x={656} y={591} w={350} t="Lignac - Sèvres" c={ORANGE} />
        <Place x={608} y={930} w={385} t="Bouillon Chartier" c={ORANGE} />
        <Place x={662} y={983} w={336} t="Montparnasse" c={ORANGE} />
        <Place x={197} y={1110} w={388} t="Musée Bourdelle" c={PURPLE} />
        <Street p={[378, 298, 592, 215]} t="Rue Oudinot" size={42} />
        <Street p={[678, 42, 732, 254]} t="Rue Vaneau" size={40} />
        <Street p={[1062, 262, 1325, 98]} t="Rue de Sèvres" size={47} />
        <Street p={[1375, 212, 1413, 438]} t="Bd Raspail" size={46} />
        <Street p={[68, 852, 350, 722]} t="Rue de Sèvres" size={47} />
        <Street p={[822, 872, 1112, 752]} t="Rue de Vaugirard" size={42} />
        <Street p={[1160, 988, 1328, 712]} t="Rue de Rennes" size={46} />
        <Metro x={268} y={67} />
        <Metro x={856} y={379} />
        <Metro x={472} y={650} />
        <Metro x={1371} y={656} />
        <Metro x={571} y={953} />
        <Metro x={1110} y={1029} />
        <Metro x={113} y={1163} />
        <Metro x={1341} y={30} />
        <Pin x={83} y={438} c={ORANGE_PIN} icon={MdRestaurant} />
        <Pin x={598} y={540} c={ORANGE_PIN} icon={MdRestaurant} />
        <Pin x={1052} y={931} c={ORANGE_PIN} icon={MdRestaurant} />
        <Pin x={645} y={1084} c={PURPLE_PIN} icon={MdMuseum} />
        <Pin x={1155} y={12} c="#1e90ef" icon={MdAccountBalance} />
        <path d="M1444 610C1440 570 1396 560 1396 520a48 48 0 1 1 97 0C1493 560 1449 570 1444 610Z" fill="#ea4335" stroke="#c5221f" strokeWidth="3" />
        <circle cx="1444" cy="521" r="19" fill="#b31412" />
        <text x="1357" y="1087" fontSize="58" textLength="172" lengthAdjust="spacingAndGlyphs" fontWeight="500" stroke="#fff" strokeWidth="7" paintOrder="stroke">
          <tspan fill="#4285f4">G</tspan>
          <tspan fill="#ea4335">o</tspan>
          <tspan fill="#fbbc05">o</tspan>
          <tspan fill="#4285f4">g</tspan>
          <tspan fill="#34a853">l</tspan>
          <tspan fill="#ea4335">e</tspan>
        </text>
      </Sector>
      <Sector x={980}>
        <Place x={-46} y={56} w={290} t="Saint-Sulpice" bold />
        <Place x={770} y={107} w={567} t="Musée de Cluny - Musée" c={PURPLE} />
        <Place x={806} y={160} w={532} t="national du Moyen Âge" c={PURPLE} />
        <Place x={1300} y={227} w={428} t="Maubert - Mutualité" bold />
        <Place x={234} y={306} w={518} t="Palais du Luxembourg" c={SLATE} />
        <Place x={525} y={454} w={397} t="Fontaine Médicis" c={PURPLE} />
        <Place x={684} y={570} w={362} t="Bd Saint-Michel" c={PURPLE} />
        <Place x={611} y={681} w={216} t="Jardin du" c={GREEN} />
        <Place x={575} y={734} w={290} t="Luxembourg" c={GREEN} />
        <Place x={16} y={888} w={548} t="Notre-Dame des Champs" bold />
        <Place x={102} y={1116} w={356} t="Musée Zadkine" c={PURPLE} />
        <Place x={1095} y={957} w={290} t="Musée Curie" c={PURPLE} />
        <Place x={1323} y={699} w={222} t="Panthéon" c={PURPLE} />
        <Place x={1348} y={342} w={267} t="Faculté des" c={SLATE} />
        <Place x={1348} y={395} w={190} t="Lettres -" c={SLATE} />
        <Place x={1348} y={447} w={222} t="Sorbonne" c={SLATE} />
        <Place x={1348} y={500} w={230} t="Université" c={SLATE} />
        <Street p={[64, 565, 407, 420]} t="Rue de Vaugirard" size={47} />
        <Street p={[140, 555, 245, 744]} t="Rue d'Assas" size={40} />
        <Street p={[1308, 572, 1480, 627]} t="Rue Cujas" size={41} />
        <Street p={[1452, 1180, 1495, 1020]} t="Rue d'Ulm" size={40} />
        <path id="comte" d="M553 993C650 993 730 998 800 1004Q860 1012 912 1030" fill="none" />
        <text fontSize="43" fontWeight="500" fill="#42566a" stroke="#fff" strokeWidth="8" paintOrder="stroke" textLength="362">
          <textPath href="#comte">Rue Auguste Comte</textPath>
        </text>
        <Metro x={266} y={41} />
        <Metro x={61} y={922} />
        <Pin x={604} y={40} c={SLATE_PIN} icon={FaCross} s={38} />
        <Pin x={1397} y={107} c={PURPLE_PIN} icon={MdMuseum} />
        <Pin x={808} y={280} c={SLATE_PIN} icon={MdAccountBalance} />
        <Pin x={981} y={428} c={PURPLE_PIN} icon={MdCameraAlt} />
        <Pin x={1103} y={545} c={PURPLE_PIN} icon={FaCross} s={40} />
        <Pin x={1290} y={395} c={SLATE_PIN} icon={MdSchool} />
        <Pin x={516} y={1090} c={PURPLE_PIN} icon={MdMuseum} />
        <Pin x={1444} y={931} c={PURPLE_PIN} icon={MdMuseum} />
      </Sector>
      <Sector x={1440}>
        <Place x={150} y={126} w={408} t="Cluny La Sorbonne" bold />
        <Place x={1270} y={69} w={128} t="Sully -" bold />
        <Place x={1224} y={340} w={162} t="Institut" c={PURPLE} />
        <text x="642" y="588" fontSize="47" fontWeight="500" fill="#2d3b49" textLength="282" stroke="#fff" strokeWidth="8" paintOrder="stroke">
          ST VICTOR
        </text>
        <Place x={1078} y={672} w={223} t="Sorbonne" c={SLATE} />
        <Place x={1074} y={725} w={230} t="Université" c={SLATE} />
        <Place x={1116} y={777} w={148} t="UPMC" c={SLATE} />
        <Place x={1362} y={674} w={27} t="T" c={GREEN} />
        <Place x={1290} y={1043} w={150} t="Jardin" c={GREEN} />
        <Place x={1290} y={1095} w={145} t="Plante" c={GREEN} />
        <Place x={746} y={756} w={170} t="Jussieu" bold />
        <Place x={320} y={846} w={402} t="Arènes de Lutèce" c={PURPLE} />
        <Street p={[343, 725, 526, 768]} t="Rue Clovis" size={41} />
        <Street p={[918, 775, 938, 988]} t="Rue Linné" size={46} />
        <Street p={[645, 92, 1028, 278]} t="Quai de la Tournelle" size={46} />
        <Metro x={122} y={110} />
        <Metro x={374} y={209} />
        <Metro x={662} y={697} />
        <Metro x={941} y={738} />
        <Pin x={709} y={339} c={PURPLE_PIN} icon={MdFort} s={46} />
        <Pin x={1166} y={314} c={PURPLE_PIN} icon={MdMuseum} />
        <Pin x={1189} y={556} c={SLATE_PIN} icon={MdSchool} />
        <Pin x={222} y={674} c={PURPLE_PIN} icon={FaMonument} s={42} />
        <Pin x={782} y={820} c={PURPLE_PIN} icon={FaChessRook} s={42} />
      </Sector>
    </>
  );
}

function SatelliteThumb() {
  return (
    <svg viewBox="0 0 48 48" className="absolute bottom-[14px] left-[14px] h-[50px] w-[50px] rounded-[3px] border-2 border-white shadow-[0_1px_4px_rgba(0,0,0,0.45)]">
      <filter id="grain" x="0" y="0" width="100%" height="100%" colorInterpolationFilters="sRGB">
        <feTurbulence type="fractalNoise" baseFrequency="0.5" numOctaves="3" seed="4" />
        <feColorMatrix values="1 0 0 0 -0.14  1 0 0 0 -0.15  0.95 0 0 0 -0.17  0 0 0 0 1" />
      </filter>
      <rect width="48" height="48" filter="url(#grain)" />
      <path d="M0 14L48 4M24 0L28 48M3 30L48 24M0 44L26 30M42 24V42" stroke="#3a3b38" strokeWidth="1.200" opacity=".6" />
    </svg>
  );
}

function LocationMap() {
  return (
    <div className="relative ml-[38px] h-[375px] w-[1867px] overflow-hidden bg-[#f4f3f4] font-[Roboto,sans-serif]">
      <svg viewBox="38 1393 1867 375" className="block h-full w-full">
        <defs>
          <filter id="pin-shadow" x="-20%" y="-20%" width="140%" height="140%">
            <feDropShadow dx="0" dy="3" stdDeviation="4" floodColor="#000" floodOpacity=".35" />
          </filter>
        </defs>
        <WestGround />
        <MidWestGround />
        <MidEastGround />
        <EastGround />
        <MapLabels />
      </svg>

      <div className="absolute top-[13px] left-[13px] flex h-[115px] w-[375px] justify-between rounded-[2px] bg-white pt-[11px] pr-[24px] pl-[15px] shadow-[0_1px_4px_rgba(0,0,0,0.3)]">
        <div>
          <p className="text-[17.5px] leading-6 font-medium tracking-[-0.1px] text-black">84 Bd Raspail</p>
          <p className="mt-[5px] text-[15px] leading-5 text-[#5b5b5b]">84 Bd Raspail, 75006 Paris</p>
          <p className="mt-[24px] text-[15px] leading-5 text-[#3a7bd5]">Agrandir le plan</p>
        </div>
        <div className="flex flex-col items-center pt-[5px]">
          <svg viewBox="0 0 22 23" className="h-[23px] w-[22px]">
            <path d="M2 3L9.500 10.500" stroke="#b5cdfb" strokeWidth="5" />
            <path d="M9.500 23V15Q9.500 11.500 12 9L16.500 4.500" stroke="#6699f5" strokeWidth="5" fill="none" />
            <path d="M11.500 0H22V10.500Z" fill="#6699f5" />
          </svg>
          <p className="mt-[5px] text-[15px] leading-5 text-[#3a7bd5]">Itinéraires</p>
        </div>
      </div>

      <SatelliteThumb />

      <div className="absolute right-[11px] bottom-[30px] flex h-[101px] w-[50px] flex-col items-center bg-white shadow-[0_1px_4px_rgba(0,0,0,0.3)]">
        <svg viewBox="0 0 50 101" className="h-full w-full">
          <path d="M14 25H36M25 14V36M14 76.500H36" stroke="#666" strokeWidth="5" />
          <path d="M6 50.500H43" stroke="#e3e3e3" />
        </svg>
      </div>

      <div className="absolute right-0 bottom-0 flex h-[17px] items-center gap-[15px] bg-[#f5f5f5]/75 pr-[7px] pl-[5px] text-[12.5px] leading-none whitespace-nowrap text-[#222]">
        <span>Raccourcis clavier</span>
        <span>Données cartographiques ©2024 Google</span>
        <span>Conditions d'utilisation</span>
        <span>Signaler une erreur cartographique</span>
      </div>
    </div>
  );
}

/* ---------- Footer ---------- */

function FooterTitle({ children }: { children: string }) {
  return <h3 className="mb-[19px] font-['Noto_Sans',sans-serif] text-[40px] leading-[48px] font-semibold">{children}</h3>;
}

function Footer() {
  return (
    <footer className="mt-[78px] flex h-[279px] w-[1920px] bg-[#1f4f3c] text-center font-[Inter,sans-serif] text-[25px] leading-8 text-[#edf2ee]">
      <div className="w-[647px] pt-[49px]">
        <FooterTitle>La vie des plantes</FooterTitle>
        <p>
          Radis et Capucine, c’est avant tout une histoire
          <br />
          de
          <br />
          <span className="tracking-[-0.22px]">famille. Créée en 1927 en Anjou, l’entreprise</span>
          <br />
          produit des graines depuis trois générations.
        </p>
      </div>
      <div className="w-[626px] pt-[49px]">
        <FooterTitle>Contact</FooterTitle>
        <p className="tracking-[-0.2px]">
          <b>Numéro de téléphone</b> : 01 28 28 97 13
          <br />
          <b>Adresse</b> : 84 Boulevard Raspail, 75006 Paris
          <br />
          <b>Adresse e-mail</b> : <a className="text-[#f7a58f]">contact@laviedesplante.fr</a>
        </p>
      </div>
      <div className="w-[647px] pt-[44px]">
        <FooterTitle>Actualité</FooterTitle>
        <p>Retrouvez ici tous nos articles</p>
        <a className="mt-[40px] block tracking-[-0.2px] text-[#f4766a]">Cliquez ici</a>
      </div>
    </footer>
  );
}

export default function App() {
  return (
    <div className="h-[2125px] w-[1940px] overflow-hidden bg-[#edf2ee]">
      <AdminBar />
      <SiteHeader />
      <h1 className="w-[1920px] text-center font-['Noto_Sans',sans-serif] text-[50px] leading-[100px] font-semibold text-[#1f4f3c]">Nous contacter</h1>
      <div className="mt-[45px]">
        <ContactForm />
      </div>
      <h2 className="mt-[176px] mb-[56px] ml-px w-[1940px] text-center font-['Noto_Sans',sans-serif] text-[40px] leading-[60px] font-semibold text-[#1f4f3c]">Nous retouver</h2>
      <LocationMap />
      <Footer />
    </div>
  );
}
